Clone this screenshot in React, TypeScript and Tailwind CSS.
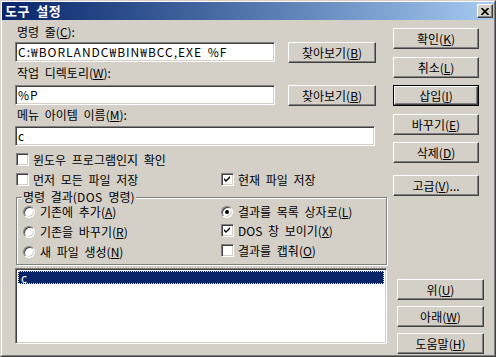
import React from "react";

const raised =
  "border border-t-white border-l-white border-r-[#404040] border-b-[#404040] shadow-[inset_-1px_-1px_0_#808080]";
const sunken =
  "border border-t-[#808080] border-l-[#808080] border-r-white border-b-white shadow-[inset_1px_1px_0_#404040,inset_-1px_-1px_0_#d4d0c8]";

function Acc({ pre, k, post = "" }: { pre: string; k: string; post?: string }) {
  return (
    <span className="whitespace-pre">
      {pre}(<u className="underline underline-offset-[1px]">{k}</u>){post}
    </span>
  );
}

function Btn({
  children,
  className = "",
  def = false,
}: {
  children: React.ReactNode;
  className?: string;
  def?: boolean;
}) {
  if (def) {
    return (
      <div className={`border border-black h-[21px] ${className}`}>
        <div className="h-full border border-t-white border-l-white border-r-[#404040] border-b-[#404040] shadow-[inset_-1px_-1px_0_#808080] flex items-center justify-center leading-[14px]">
          {children}
        </div>
      </div>
    );
  }
  return (
    <div className={`${raised} h-[21px] flex items-center justify-center leading-[14px] ${className}`}>
      {children}
    </div>
  );
}

function Check({ checked = false, children }: { checked?: boolean; children: React.ReactNode }) {
  return (
    <div className="flex items-start gap-[4px] h-[14px]">
      <div className={`${sunken} bg-white w-[13px] h-[13px] mt-[1px] shrink-0 flex items-center justify-center`}>
        {checked && (
          <svg width="7" height="7" viewBox="0 0 7 7">
            <path d="M0 2 L2 4 L6 0 V2 L2 6 L0 4 Z" fill="#000" />
          </svg>
        )}
      </div>
      <span className="leading-[14px] mt-[1px]">{children}</span>
    </div>
  );
}

function Radio({ checked = false, children }: { checked?: boolean; children: React.ReactNode }) {
  return (
    <div className="flex items-center gap-[5px] h-[14px]">
      <div className="w-[12px] h-[12px] shrink-0 rounded-full bg-white border border-t-[#808080] border-l-[#808080] border-r-white border-b-white shadow-[inset_1px_1px_0_#404040,inset_-1px_-1px_0_#d4d0c8] flex items-center justify-center">
        {checked && <div className="w-[4px] h-[4px] rounded-full bg-black" />}
      </div>
      <span className="leading-[14px]">{children}</span>
    </div>
  );
}

export default function App() {
  return (
    <div className="w-[496px] h-[357px] bg-[#d4d0c8] text-black text-[12px] [word-spacing:3px] font-['Noto_Sans_CJK_KR','Noto_Sans',sans-serif] border border-t-[#d4d0c8] border-l-[#d4d0c8] border-r-[#404040] border-b-[#404040] overflow-hidden">
      <div className="h-full flex flex-col border border-t-white border-l-white border-r-[#808080] border-b-[#808080]">
        {/* Title bar */}
        <div className="h-[18px] shrink-0 flex items-center pl-[3px] pr-[1px] bg-linear-to-r from-[#0a246a] to-[#a6caf0]">
          <span className="text-white font-bold text-[13px] leading-[16px] tracking-[0.5px] flex-1">도구 설정</span>
          <div className={`${raised} w-[16px] h-[14px] bg-[#d4d0c8] flex items-center justify-center`}>
            <svg width="8" height="7" viewBox="0 0 8 7">
              <path d="M0.5 0 L7.5 7 M7.5 0 L0.5 7" stroke="#000" strokeWidth="1.6" />
            </svg>
          </div>
        </div>

        {/* Body */}
        <div className="flex flex-1 pl-[13px]">
          {/* Left column */}
          <div className="w-[372px] flex flex-col">
            <div className="mt-[5px] h-[14px] leading-[14px] pl-[2px]">
              <Acc pre="명령 줄" k="C" post=":" />
            </div>
            <div className="mt-[3px] flex items-start">
              <div className={`${sunken} bg-white w-[260px] h-[20px] pl-[2px] flex items-center leading-[14px] tracking-[1px] [word-spacing:2px]`}>
                C:₩BORLANDC₩BIN₩BCC,EXE %F
              </div>
              <Btn className="ml-[13px] w-[88px]">
                <Acc pre="찾아보기" k="B" />
              </Btn>
            </div>
            <div className="mt-[3px] h-[14px] leading-[14px] pl-[2px]">
              <Acc pre="작업 디렉토리" k="W" post=":" />
            </div>
            <div className="mt-[5px] flex items-start">
              <div className={`${sunken} bg-white w-[260px] h-[20px] pl-[2px] flex items-center leading-[14px] tracking-[1px]`}>
                %P
              </div>
              <Btn className="ml-[13px] w-[88px]">
                <Acc pre="찾아보기" k="B" />
              </Btn>
            </div>
            <div className="mt-[2px] h-[14px] leading-[14px] pl-[2px]">
              <Acc pre="메뉴 아이템 이름" k="M" post=":" />
            </div>
            <div className={`${sunken} mt-[4px] bg-white w-[360px] h-[20px] pl-[2px] flex items-center leading-[14px]`}>
              c
            </div>
            <div className="mt-[6px] pl-[1px]">
              <Check>윈도우 프로그램인지 확인</Check>
            </div>
            <div className="mt-[6px] pl-[1px] flex">
              <div className="w-[205px]">
                <Check>먼저 모든 파일 저장</Check>
              </div>
              <Check checked>현재 파일 저장</Check>
            </div>

            {/* Group box */}
            <div className="relative mt-[11px] ml-[1px] w-[371px] h-[68px] border border-[#808080] shadow-[1px_1px_0_#fff,inset_1px_1px_0_#fff]">
              <span className="absolute left-[5px] top-[-7px] px-[1px] bg-[#d4d0c8] leading-[12px]">
                명령 결과(<span className="tracking-[0.5px]">DOS</span> 명령)
              </span>
              <div className="flex pt-[7px] pl-[6px]">
                <div className="w-[198px] flex flex-col gap-[6px]">
                  <Radio>
                    <Acc pre="기존에 추가" k="A" />
                  </Radio>
                  <Radio>
                    <Acc pre="기존을 바꾸기" k="R" />
                  </Radio>
                  <Radio>
                    <Acc pre="새 파일 생성" k="N" />
                  </Radio>
                </div>
                <div className="flex flex-col gap-[6px]">
                  <Radio checked>
                    <Acc pre="결과를 목록 상자로" k="L" />
                  </Radio>
                  <div className="-mt-[2px]">
                    <Check checked>
                      <Acc pre="DOS 창 보이기" k="X" />
                    </Check>
                  </div>
                  <Check>
                    <Acc pre="결과를 캡춰" k="O" />
                  </Check>
                </div>
              </div>
            </div>

            {/* List box */}
            <div className={`${sunken} mt-[3px] bg-white w-[372px] h-[76px] p-[2px]`}>
              <div className="h-[13px] bg-[#0a246a] border border-dotted border-[#e8e4b8] text-white leading-[11px] pl-[2px]">
                c
              </div>
            </div>
          </div>

          {/* Right column */}
          <div className="ml-[6px] flex flex-col">
            <Btn className="mt-[8px] w-[86px]">
              <Acc pre="확인" k="K" />
            </Btn>
            <Btn className="mt-[8px] w-[86px]">
              <Acc pre="취소" k="L" />
            </Btn>
            <Btn def className="mt-[7px] w-[86px]">
              <Acc pre="삽입" k="I" />
            </Btn>
            <Btn className="mt-[8px] w-[86px]">
              <Acc pre="바꾸기" k="E" />
            </Btn>
            <Btn className="mt-[7px] w-[86px]">
              <Acc pre="삭제" k="D" />
            </Btn>
            <Btn className="mt-[12px] w-[86px]">
              <Acc pre="고급" k="V" post="..." />
            </Btn>
            <Btn className="mt-[83px] ml-[4px] w-[87px]">
              <Acc pre="위" k="U" />
            </Btn>
            <Btn className="mt-[6px] ml-[4px] w-[87px]">
              <Acc pre="아래" k="W" />
            </Btn>
            <Btn className="mt-[6px] ml-[4px] w-[87px]">
              <Acc pre="도움말" k="H" />
            </Btn>
          </div>
        </div>
      </div>
    </div>
  );
}
